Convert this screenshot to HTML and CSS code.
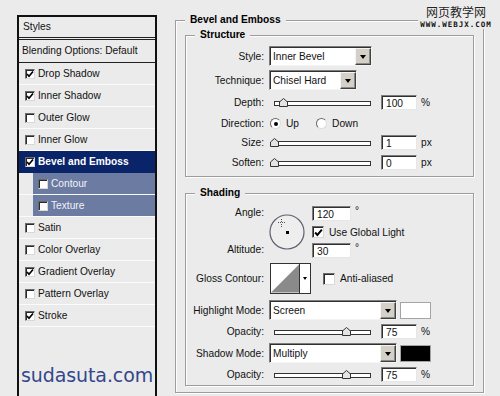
FILE: index.html
```html
<!DOCTYPE html>
<html>
<head>
<meta charset="utf-8">
<title>Layer Style - Bevel and Emboss</title>
<link rel="stylesheet" href="styles.css">
</head>
<body>
<div class="screen">
  <aside class="styles-panel">
    <div class="sp-head">Styles</div>
    <div class="sp-blend">Blending Options: Default</div>
    <ul class="sp-list">
      <li class="sp-item"><span class="cb on"><svg viewBox="0 0 8 8"><path d="M1 4 L3 6.2 L7 1.5"/></svg></span>Drop Shadow</li>
      <li class="sp-item"><span class="cb on"><svg viewBox="0 0 8 8"><path d="M1 4 L3 6.2 L7 1.5"/></svg></span>Inner Shadow</li>
      <li class="sp-item"><span class="cb"></span>Outer Glow</li>
      <li class="sp-item"><span class="cb"></span>Inner Glow</li>
      <li class="sp-item active"><span class="cb on"><svg viewBox="0 0 8 8"><path d="M1 4 L3 6.2 L7 1.5"/></svg></span>Bevel and Emboss</li>
      <li class="sp-item sub"><div class="sub-inner"><span class="cb"></span>Contour</div></li>
      <li class="sp-item sub"><div class="sub-inner"><span class="cb"></span>Texture</div></li>
      <li class="sp-item"><span class="cb"></span>Satin</li>
      <li class="sp-item"><span class="cb"></span>Color Overlay</li>
      <li class="sp-item"><span class="cb on"><svg viewBox="0 0 8 8"><path d="M1 4 L3 6.2 L7 1.5"/></svg></span>Gradient Overlay</li>
      <li class="sp-item"><span class="cb"></span>Pattern Overlay</li>
      <li class="sp-item"><span class="cb on"><svg viewBox="0 0 8 8"><path d="M1 4 L3 6.2 L7 1.5"/></svg></span>Stroke</li>
    </ul>
    <div class="logo">sudasuta.com</div>
  </aside>

  <main class="dialog">
    <section class="group outer">
      <h2 class="gtitle">Bevel and Emboss</h2>

      <section class="group structure">
        <h3 class="gtitle inner-title">Structure</h3>

        <div class="row r-style">
          <span class="lbl">Style:</span>
          <div class="select w-style"><span class="sel-text">Inner Bevel</span><span class="sel-btn"><i class="arrow"></i></span></div>
        </div>

        <div class="row r-tech">
          <span class="lbl">Technique:</span>
          <div class="select w-tech"><span class="sel-text">Chisel Hard</span><span class="sel-btn"><i class="arrow"></i></span></div>
        </div>

        <div class="row r-depth">
          <span class="lbl">Depth:</span>
          <div class="slider"><div class="track"></div><svg class="thumb" style="left:10%" viewBox="0 0 9 9"><polygon points="0.5,8.5 0.5,4 4.5,0.5 8.5,4 8.5,8.5"/></svg></div>
          <div class="field">100</div><span class="unit">%</span>
        </div>

        <div class="row r-dir">
          <span class="lbl">Direction:</span>
          <span class="radio on"></span><span class="rtext">Up</span>
          <span class="radio r-down"></span><span class="rtext">Down</span>
        </div>

        <div class="row r-size">
          <span class="lbl">Size:</span>
          <div class="slider"><div class="track"></div><svg class="thumb" style="left:0.4%" viewBox="0 0 9 9"><polygon points="0.5,8.5 0.5,4 4.5,0.5 8.5,4 8.5,8.5"/></svg></div>
          <div class="field">1</div><span class="unit">px</span>
        </div>

        <div class="row r-soften">
          <span class="lbl">Soften:</span>
          <div class="slider"><div class="track"></div><svg class="thumb" style="left:0%" viewBox="0 0 9 9"><polygon points="0.5,8.5 0.5,4 4.5,0.5 8.5,4 8.5,8.5"/></svg></div>
          <div class="field">0</div><span class="unit">px</span>
        </div>
      </section>

      <section class="group shading">
        <h3 class="gtitle inner-title">Shading</h3>

        <div class="angle-block">
          <div class="angle-labels">
            <span class="lbl-line">Angle:</span>
            <span class="lbl-line">Altitude:</span>
          </div>
          <div class="dial">
            <svg viewBox="0 0 36 36">
              <circle class="dial-ring" cx="18" cy="18" r="17"/>
              <g class="cross">
                <rect x="12" y="5" width="1" height="1"/><rect x="12" y="7" width="1" height="1"/>
                <rect x="12" y="10" width="1" height="1"/><rect x="12" y="12" width="1" height="1"/>
                <rect x="9" y="8" width="1" height="1"/><rect x="11" y="8" width="1" height="1"/>
                <rect x="13" y="8" width="1" height="1"/><rect x="15" y="8" width="1" height="1"/>
              </g>
              <rect x="17" y="17" width="3" height="3" fill="#000"/>
            </svg>
          </div>
          <div class="angle-controls">
            <div class="ctl-line"><div class="field w-angle">120</div><span class="unit deg">°</span></div>
            <div class="ctl-check"><span class="cb big on"><svg viewBox="0 0 8 8"><path d="M1 4 L3 6.2 L7 1.5"/></svg></span><span class="ctext">Use Global Light</span></div>
            <div class="ctl-line"><div class="field w-angle">30</div><span class="unit deg">°</span></div>
          </div>
        </div>

        <div class="row r-gloss">
          <span class="lbl">Gloss Contour:</span>
          <div class="contour">
            <svg class="contour-curve" viewBox="0 0 30 30"><rect width="30" height="30" fill="#fff"/><polygon points="0,30 30,0 30,30" fill="#8a8a8a"/></svg>
            <span class="contour-btn"><i class="arrow small"></i></span>
          </div>
          <span class="cb big aa"></span><span class="ctext">Anti-aliased</span>
        </div>

        <div class="row r-hmode">
          <span class="lbl">Highlight Mode:</span>
          <div class="select w-mode"><span class="sel-text">Screen</span><span class="sel-btn"><i class="arrow"></i></span></div>
          <span class="swatch white"></span>
        </div>

        <div class="row r-op1">
          <span class="lbl">Opacity:</span>
          <div class="slider"><div class="track"></div><svg class="thumb" style="left:75%" viewBox="0 0 9 9"><polygon points="0.5,8.5 0.5,4 4.5,0.5 8.5,4 8.5,8.5"/></svg></div>
          <div class="field">75</div><span class="unit">%</span>
        </div>

        <div class="row r-smode">
          <span class="lbl">Shadow Mode:</span>
          <div class="select w-mode"><span class="sel-text">Multiply</span><span class="sel-btn"><i class="arrow"></i></span></div>
          <span class="swatch black"></span>
        </div>

        <div class="row r-op2">
          <span class="lbl">Opacity:</span>
          <div class="slider"><div class="track"></div><svg class="thumb" style="left:75%" viewBox="0 0 9 9"><polygon points="0.5,8.5 0.5,4 4.5,0.5 8.5,4 8.5,8.5"/></svg></div>
          <div class="field">75</div><span class="unit">%</span>
        </div>
      </section>
    </section>

    <div class="watermark">
      <div class="wm-cn">网页教学网</div>
      <div class="wm-en">WWW.WEBJX.COM</div>
    </div>
  </main>
</div>
</body>
</html>
```

FILE: styles.css
```css
* { box-sizing: border-box; }

html, body {
  margin: 0;
  padding: 0;
  background: #ebebeb;
  overflow: hidden;
}

body {
  width: 500px;
  height: 396px;
  font-family: "Liberation Sans", Arial, sans-serif;
  font-size: 10.2px;
  color: #111;
}

.screen {
  display: flex;
  align-items: flex-start;
}

/* ---------- Styles list panel ---------- */
.styles-panel {
  margin: 15px 0 0 17px;
  width: 140px;
  height: 400px;
  border: 2px solid #111;
  border-bottom: none;
  background: #ebebeb;
  display: flex;
  flex-direction: column;
}

.sp-head {
  height: 23px;
  line-height: 19px;
  padding-left: 4px;
  border-bottom: 3px double #222;
}

.sp-blend {
  height: 23px;
  line-height: 22px;
  padding-left: 3px;
  border-bottom: 1px solid #222;
}

.sp-list {
  list-style: none;
  margin: 0;
  padding: 0;
}

.sp-item {
  height: 22px;
  border-bottom: 1px solid #fbfbfb;
  display: flex;
  align-items: center;
  padding-left: 6px;
  white-space: nowrap;
}

.sp-item.active {
  background: #0a246a;
  color: #fff;
  font-weight: bold;
  border-bottom-color: #0a246a;
}

.sp-item.sub {
  padding-left: 14px;
  align-items: stretch;
}

.sub-inner {
  flex: 1;
  display: flex;
  align-items: center;
  padding-left: 5px;
  background: #6c7ba2;
  color: #f2f2f6;
}

.cb {
  width: 10px;
  height: 10px;
  margin-right: 3px;
  flex-shrink: 0;
  background: #fff;
  border: 1px solid;
  border-color: #6a6a6a #d8d8d8 #d8d8d8 #6a6a6a;
  box-shadow: inset 1px 1px 0 #2a2a2a;
  display: flex;
  align-items: center;
  justify-content: center;
}

.cb svg {
  width: 8px;
  height: 8px;
  fill: none;
  stroke: #000;
  stroke-width: 1.7;
}

.cb.big {
  width: 12px;
  height: 12px;
}

.cb.big svg {
  width: 9px;
  height: 9px;
}

.logo {
  margin-top: 36px;
  padding-left: 2px;
  font-family: "DejaVu Sans", sans-serif;
  font-size: 19px;
  line-height: 24px;
  color: #34478b;
  letter-spacing: -0.1px;
}

/* ---------- Dialog ---------- */
.dialog {
  position: relative;
  margin-left: 18px;
  margin-top: 20px;
}

.group {
  border: 1px solid #9d9d9d;
  box-shadow: inset 1px 1px 0 #fdfdfd, 1px 1px 0 #fdfdfd;
}

.outer {
  width: 309px;
  padding: 0 9px 6px 9px;
}

.gtitle {
  margin: -7px 0 0 0;
  height: 12px;
  line-height: 12px;
  width: fit-content;
  padding: 0 5px;
  background: #ebebeb;
  font-size: 10.2px;
  font-weight: bold;
  color: #000;
}

.inner-title {
  margin-left: 9px;
}

.structure {
  margin-top: 9px;
  padding-bottom: 6px;
}

.shading {
  margin-top: 16px;
  padding-bottom: 3px;
}

.row {
  display: flex;
  align-items: center;
  white-space: nowrap;
}

.lbl {
  width: 78px;
  text-align: right;
  margin-right: 5px;
  flex-shrink: 0;
}

.r-style  { margin-top: 5px; height: 20px; }
.r-tech   { margin-top: 4px; height: 20px; }
.r-depth  { margin-top: 5px; height: 15px; }
.r-dir    { margin-top: 6px; height: 15px; }
.r-size   { margin-top: 4px; height: 15px; }
.r-soften { margin-top: 5px; height: 15px; }

.r-gloss  { margin-top: 5px; height: 31px; }
.r-hmode  { margin-top: 6px; height: 20px; }
.r-op1    { margin-top: 4px; height: 15px; }
.r-smode  { margin-top: 4px; height: 20px; }
.r-op2    { margin-top: 4px; height: 15px; }

/* select */
.select {
  height: 20px;
  display: flex;
  align-items: stretch;
  background: #fff;
  border: 1px solid;
  border-color: #7d7d7d #f4f4f4 #f4f4f4 #7d7d7d;
  box-shadow: inset 1px 1px 0 #303030;
}

.w-style { width: 103px; }
.w-tech  { width: 88px; }
.w-mode  { width: 128px; }

.sel-text {
  flex: 1;
  padding: 0 0 0 3px;
  display: flex;
  align-items: center;
  margin-top: 1px;
}

.sel-btn {
  width: 16px;
  background: #d4d0c8;
  border: 1px solid;
  border-color: #f4f4f4 #404040 #404040 #f4f4f4;
  box-shadow: inset -1px -1px 0 #8a8a8a;
  display: flex;
  align-items: center;
  justify-content: center;
  margin: 1px 0 0 0;
}

.arrow {
  width: 0;
  height: 0;
  border-left: 3.5px solid transparent;
  border-right: 3.5px solid transparent;
  border-top: 4px solid #000;
}

.arrow.small {
  border-left-width: 2.5px;
  border-right-width: 2.5px;
  border-top-width: 3px;
}

/* input field */
.field {
  width: 36px;
  height: 15px;
  line-height: 13px;
  padding-left: 4px;
  padding-top: 1px;
  background: #fff;
  border: 1px solid;
  border-color: #7d7d7d #e6e6e6 #e6e6e6 #7d7d7d;
  box-shadow: inset 1px 1px 0 #303030;
  flex-shrink: 0;
}

.slider + .field { margin-left: 10px; }

.w-angle { width: 39px; }

.unit {
  margin-left: 4px;
}

.unit.deg {
  margin-left: 4px;
  align-self: flex-start;
  line-height: 10px;
}

/* slider */
.slider {
  position: relative;
  width: 97px;
  height: 15px;
  margin-left: 5px;
  flex-shrink: 0;
}

.track {
  margin-top: 6px;
  height: 5px;
  background: #fff;
  border: 1px solid #333;
}

.thumb {
  position: absolute;
  top: 3px;
  width: 9px;
  height: 9px;
  margin-left: -4.5px;
  fill: #e4e4e4;
  stroke: #333;
  stroke-width: 1;
}

/* radio */
.radio {
  width: 11px;
  height: 11px;
  border-radius: 50%;
  background: #fff;
  border: 1px solid;
  border-color: #6a6a6a #dcdcdc #dcdcdc #6a6a6a;
  margin-left: 1px;
  display: flex;
  align-items: center;
  justify-content: center;
  flex-shrink: 0;
}

.radio.on::after {
  content: "";
  width: 4px;
  height: 4px;
  border-radius: 50%;
  background: #000;
}

.r-down { margin-left: 17px; }

.rtext { margin-left: 5px; }

/* angle block */
.angle-block {
  margin-top: 7px;
  display: flex;
  height: 52px;
}

.angle-labels {
  width: 78px;
  flex-shrink: 0;
  display: flex;
  flex-direction: column;
  justify-content: space-between;
  text-align: right;
}

.lbl-line {
  height: 15px;
  line-height: 13px;
}

.dial {
  width: 36px;
  height: 36px;
  margin-left: 5px;
  align-self: center;
}

.dial svg {
  display: block;
  width: 36px;
  height: 36px;
}

.dial-ring {
  fill: #eeeeee;
  stroke: #5d6170;
  stroke-width: 1.2;
}

.cross rect { fill: #555; }

.angle-controls {
  margin-left: 7px;
  display: flex;
  flex-direction: column;
}

.ctl-line {
  display: flex;
  height: 15px;
}

.ctl-check {
  display: flex;
  align-items: center;
  height: 12px;
  margin: 5px 0 5px 0;
}

.ctext {
  margin-left: 2px;
}

/* gloss contour */
.contour {
  margin-left: 1px;
  width: 41px;
  height: 31px;
  border: 1px solid #333;
  display: flex;
  background: #fff;
}

.contour-curve {
  display: block;
  width: 29px;
  height: 29px;
  border-right: 1px solid #333;
}

.contour-btn {
  flex: 1;
  display: flex;
  align-items: center;
  justify-content: center;
  background: #fff;
}

.cb.aa {
  margin-left: 12px;
  margin-right: 3px;
}

/* swatches */
.swatch {
  width: 31px;
  height: 17px;
  margin-left: 3px;
  border: 1px solid #a4a4a4;
}

.swatch.white { background: #fff; }
.swatch.black { background: #000; }

/* watermark overlay */
.watermark {
  position: absolute;
  top: -14px;
  left: 243px;
  width: 76px;
  text-align: center;
  background: #ebebeb;
  line-height: 1;
}

.wm-cn {
  font-family: "Noto Sans CJK SC", sans-serif;
  font-size: 12px;
  color: #222;
  letter-spacing: 0;
  text-shadow: 0 0 1px #fff;
}

.wm-en {
  margin-top: 3px;
  font-family: "DejaVu Sans Mono", monospace;
  font-weight: bold;
  font-size: 7.5px;
  letter-spacing: 1px;
  color: #111;
}
```
